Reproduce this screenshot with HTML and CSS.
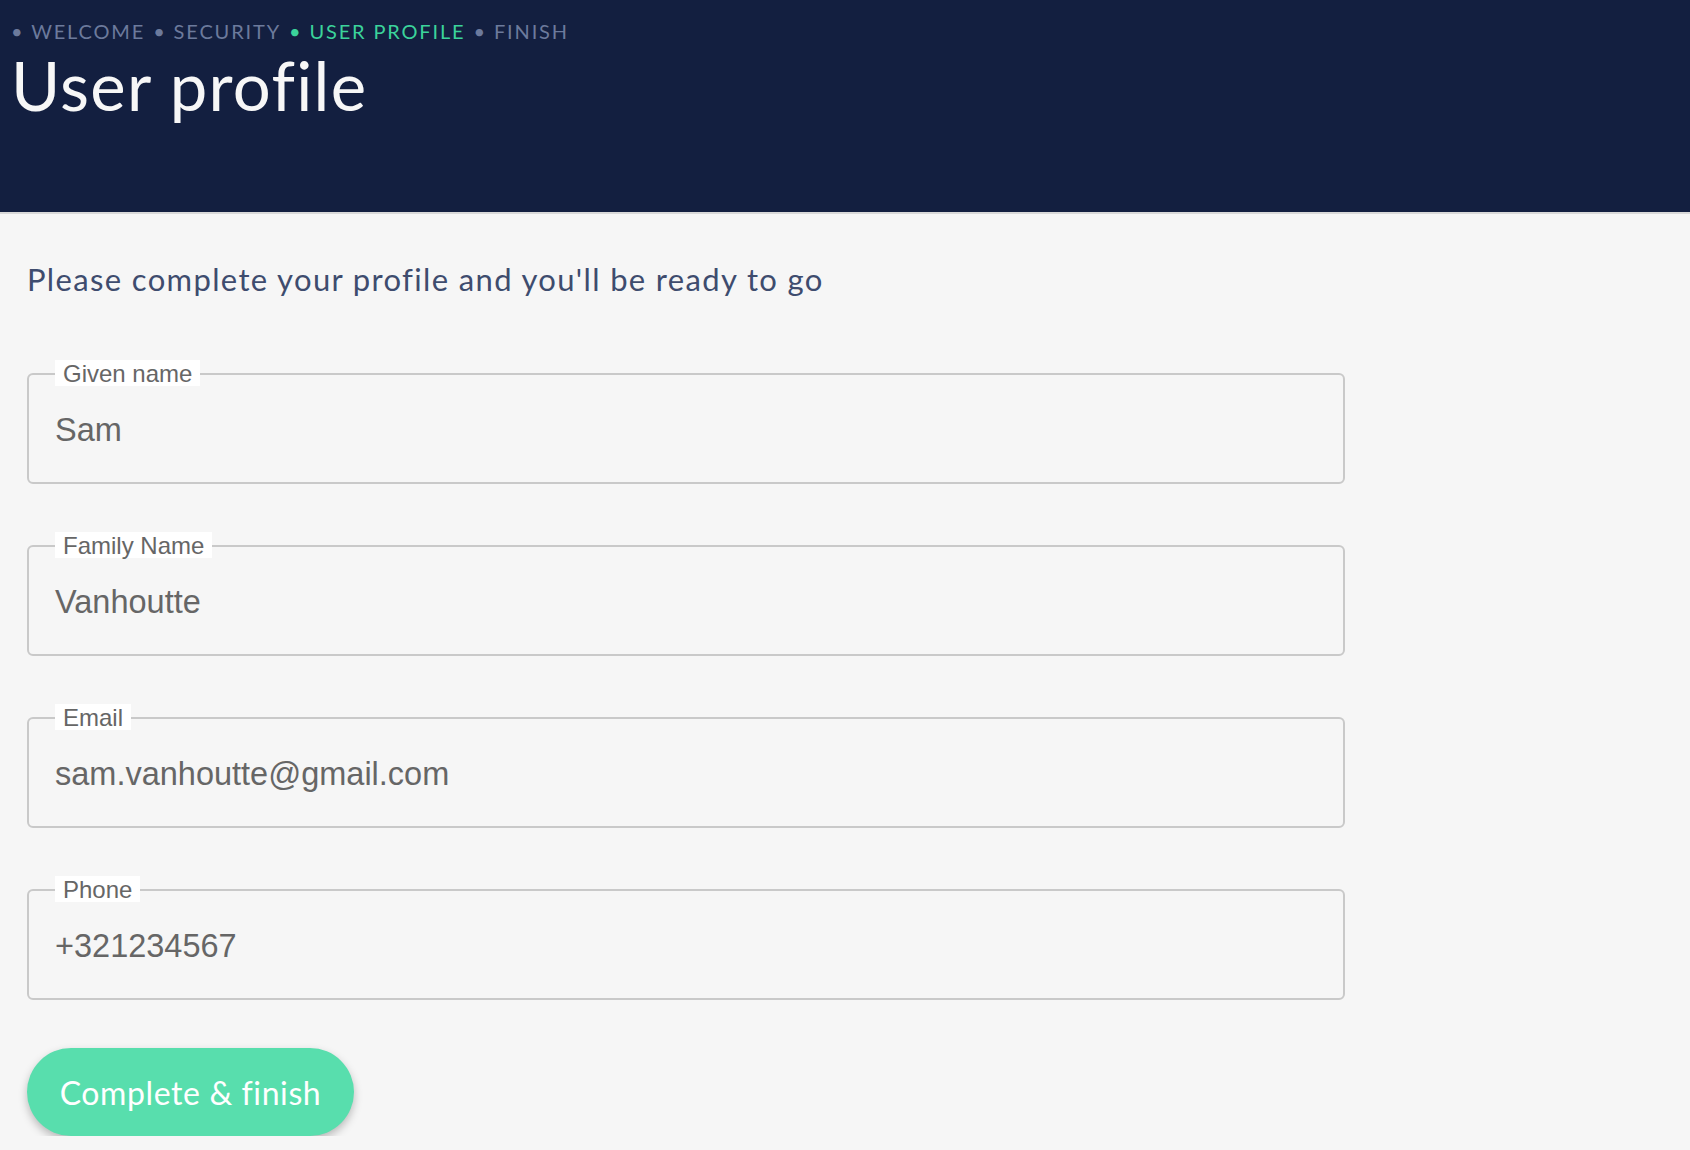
FILE: index.html
```html
<!DOCTYPE html>
<html lang="en">
<head>
<meta charset="utf-8">
<title>User profile</title>
<link rel="stylesheet" href="styles.css">
</head>
<body>
<header class="hero">
  <nav class="steps">
    <span class="step">• WELCOME</span>
    <span class="step">• SECURITY</span>
    <span class="step step-active">• USER PROFILE</span>
    <span class="step">• FINISH</span>
  </nav>
  <h1 class="title">User profile</h1>
</header>
<main class="content">
  <p class="intro">Please complete your profile and you'll be ready to go</p>
  <form class="form">
    <div class="field">
      <span class="field-label">Given name</span>
      <div class="field-value">Sam</div>
    </div>
    <div class="field">
      <span class="field-label">Family Name</span>
      <div class="field-value">Vanhoutte</div>
    </div>
    <div class="field">
      <span class="field-label">Email</span>
      <div class="field-value">sam.vanhoutte@gmail.com</div>
    </div>
    <div class="field">
      <span class="field-label">Phone</span>
      <div class="field-value">+321234567</div>
    </div>
  </form>
  <button class="btn" type="button">Complete &amp; finish</button>
</main>
</body>
</html>
```
FILE: styles.css
```css
html, body {
  margin: 0;
  padding: 0;
}
body {
  background: #f6f6f6;
  font-family: "Lato", "Open Sans", sans-serif;
}
.hero {
  height: 214px;
  box-sizing: border-box;
  background: #131f40;
  border-bottom: 2px solid #d9d9d9;
  padding: 19px 0 0 11px;
}
.steps {
  display: flex;
  gap: 8px;
  font-size: 20px;
  line-height: 24px;
  letter-spacing: 1.85px;
  color: #6c7a9c;
}
.step-active {
  color: #3bd39b;
}
.title {
  margin: 2px 0 0;
  font-size: 67px;
  line-height: 1.2;
  font-weight: 400;
  letter-spacing: 1.3px;
  color: #f7f7f7;
}
.content {
  display: flex;
  flex-direction: column;
  align-items: flex-start;
  padding: 47px 27px 0;
}
.intro {
  margin: 0 0 75px;
  font-size: 31px;
  line-height: 1.2;
  letter-spacing: 1.35px;
  color: #3e4c6e;
}
.form {
  display: flex;
  flex-direction: column;
  gap: 61px;
}
.field {
  position: relative;
  width: 1318px;
  height: 111px;
  box-sizing: border-box;
  border: 2px solid #c9c9c9;
  border-radius: 6px;
  padding: 35px 26px 0;
  font-family: "Liberation Sans", Arial, sans-serif;
}
.field-label {
  position: absolute;
  top: -15px;
  left: 26px;
  padding: 1px 8px 0;
  background: #ffffff;
  font-size: 24px;
  line-height: 25px;
  color: #666666;
}
.field-value {
  font-size: 32.5px;
  line-height: 40px;
  color: #666666;
}
.btn {
  margin-top: 48px;
  width: 327px;
  height: 88px;
  border: 0;
  border-radius: 44px;
  background: #58dead;
  color: #ffffff;
  font-family: "Lato", "Open Sans", sans-serif;
  font-size: 32px;
  letter-spacing: 0.6px;
  box-shadow: 0 4px 8px rgba(0, 0, 0, 0.25);
  padding: 0;
}
```
